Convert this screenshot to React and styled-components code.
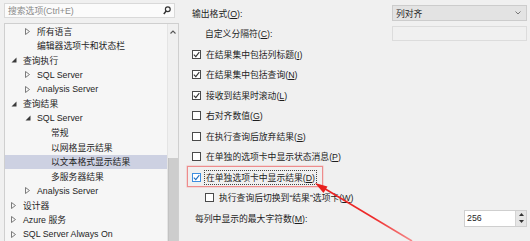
import React from "react";
import styled, { createGlobalStyle } from "styled-components";

const Global = createGlobalStyle`
  html, body { margin: 0; padding: 0; background: #f0f0f0; }
  body { font-family: "Liberation Sans", "Noto Sans CJK SC", sans-serif; color: #1e1e1e; }
  * { box-sizing: border-box; }
`;

const Page = styled.div`
  position: relative;
  width: 530px;
  height: 241px;
  overflow: hidden;
  display: flex;
  background: #f0f0f0;
  font-size: 8.8px;
`;

const LeftCol = styled.div`
  width: 180px;
  flex: none;
  padding: 3px 0 0 4px;
  display: flex;
  flex-direction: column;
  gap: 5px;
`;

const Search = styled.div`
  width: 171px;
  height: 15px;
  border: 1px solid #d9d9d9;
  background: #fbfbfb;
  display: flex;
  align-items: center;
  justify-content: space-between;
  padding: 0 3px 0 3px;
  color: #8a8a8a;
  font-size: 8.8px;
`;

const Tree = styled.div`
  width: 175px;
  height: 230px;
  border: 1px solid #cfcfcf;
  border-bottom: none;
  background: #f6f6f6;
  display: flex;
`;

const List = styled.div`
  flex: 1;
  display: flex;
  flex-direction: column;
`;

const Row = styled.div`
  height: 14.5px;
  display: flex;
  align-items: center;
  padding-left: ${(p) => 6 + p.$level * 14}px;
  background: ${(p) => (p.$selected ? "#cdd1e2" : "transparent")};
  white-space: nowrap;
  font-size: 8.8px;
  color: #1e1e1e;
`;

const ArrowCell = styled.span`
  width: 12px;
  flex: none;
  display: flex;
  align-items: center;
`;

const ScrollBar = styled.div`
  width: 11px;
  flex: none;
  display: flex;
  flex-direction: column;
  border-left: 1px solid #e4e4e4;
  background: #f0f0f0;
`;

const ScrollUp = styled.div`
  height: 14px;
  display: flex;
  align-items: center;
  justify-content: center;
  margin-top: 1px;
`;

const ScrollTrack = styled.div`
  flex: 1;
  padding-top: 119px;
  display: flex;
`;

const Thumb = styled.div`
  flex: 1;
  background: #cdcdcd;
  border-left: 1px solid #c2c2c2;
`;

const RightCol = styled.div`
  flex: 1;
  padding: 2.75px 3px 0 12px;
  display: flex;
  flex-direction: column;
`;

const FRow = styled.div`
  height: 20.5px;
  display: flex;
  align-items: center;
  justify-content: space-between;
  padding-left: ${(p) => p.$indent || 0}px;
  white-space: nowrap;
`;

const CheckLine = styled.label`
  display: flex;
  align-items: center;
  gap: 4px;
  padding-left: ${(p) => p.$indent || 0}px;
`;

const Box = styled.span`
  width: 9px;
  height: 9px;
  flex: none;
  border: 1px solid ${(p) => (p.$blue ? "#3d8ee0" : "#4a4a4a")};
  background: #fff;
  display: flex;
  align-items: center;
  justify-content: center;
`;

const LabelText = styled.span`
  color: #1e1e1e;
  padding: 0 1px;
  outline: ${(p) => (p.$focus ? "1px dotted #444" : "none")};
`;

const Select = styled.div`
  width: 135px;
  height: 16px;
  border: 1px solid #cccccc;
  background: #e3e3e3;
  display: flex;
  align-items: center;
  justify-content: space-between;
  padding: 0 5px 0 3px;
  color: #1e1e1e;
`;

const TextInput = styled.div`
  width: 135px;
  height: 15px;
  border: 1px solid #dcdcdc;
  background: #f0f0f0;
`;

const Spinner = styled.div`
  width: 63px;
  height: 17px;
  border: 1px solid #cfcfcf;
  background: #fff;
  display: flex;
  align-items: stretch;
`;

const SpinValue = styled.div`
  flex: 1;
  display: flex;
  align-items: center;
  padding-left: 2px;
  color: #1e1e1e;
`;

const SpinBtns = styled.div`
  width: 11px;
  display: flex;
  flex-direction: column;
  background: #e6e6e6;
  border-left: 1px solid #d4d4d4;
`;

const SpinBtn = styled.div`
  flex: 1;
  display: flex;
  align-items: center;
  justify-content: center;
`;

const Annot = styled.div`
  position: absolute;
  left: 187px;
  top: 166px;
  width: 136px;
  height: 21px;
  border: 1px solid #ee8c8c;
  box-shadow: 0 0 0 0.5px rgba(240, 120, 120, 0.4);
  pointer-events: none;
`;

const ArrowSvg = styled.svg`
  position: absolute;
  left: 0;
  top: 0;
  pointer-events: none;
`;

const Collapsed = () => (
  <svg width="5" height="7" viewBox="0 0 5 7">
    <path d="M0.5 0.5 L4.5 3.5 L0.5 6.5 Z" fill="none" stroke="#6e6e6e" strokeWidth="0.9" />
  </svg>
);

const Expanded = () => (
  <svg width="6" height="6" viewBox="0 0 6 6">
    <path d="M5.5 0.5 L5.5 5.5 L0.5 5.5 Z" fill="#3a3a3a" />
  </svg>
);

const Check = ({ color = "#333" }) => (
  <svg width="7" height="7" viewBox="0 0 7 7">
    <path d="M0.8 3.6 L2.8 5.6 L6.3 1.2" fill="none" stroke={color} strokeWidth="1.1" />
  </svg>
);

const U = styled.span`
  text-decoration: underline;
`;

const treeItems = [
  { level: 1, arrow: "c", text: "所有语言" },
  { level: 1, arrow: null, text: "编辑器选项卡和状态栏" },
  { level: 0, arrow: "e", text: "查询执行" },
  { level: 1, arrow: "c", text: "SQL Server" },
  { level: 1, arrow: "c", text: "Analysis Server" },
  { level: 0, arrow: "e", text: "查询结果" },
  { level: 1, arrow: "e", text: "SQL Server" },
  { level: 2, arrow: null, text: "常规" },
  { level: 2, arrow: null, text: "以网格显示结果" },
  { level: 2, arrow: null, text: "以文本格式显示结果", selected: true },
  { level: 2, arrow: null, text: "多服务器结果" },
  { level: 1, arrow: "c", text: "Analysis Server" },
  { level: 0, arrow: "c", text: "设计器" },
  { level: 0, arrow: "c", text: "Azure 服务" },
  { level: 0, arrow: "c", text: "SQL Server Always On" },
];

const checks = [
  { label: "在结果集中包括列标题", key: "I", checked: true },
  { label: "在结果集中包括查询", key: "N", checked: true },
  { label: "接收到结果时滚动", key: "L", checked: true },
  { label: "右对齐数值", key: "G", checked: false },
  { label: "在执行查询后放弃结果", key: "S", checked: false },
  { label: "在单独的选项卡中显示状态消息", key: "P", checked: false },
  { label: "在单独选项卡中显示结果", key: "D", checked: true, blue: true, focus: true },
  { label: "执行查询后切换到“结果”选项卡", key: "W", checked: false, indent: 13 },
];

export default function App() {
  return (
    <>
      <Global />
      <Page>
        <LeftCol>
          <Search>
            <span>搜索选项(Ctrl+E)</span>
            <svg width="8" height="9" viewBox="0 0 8 9">
              <circle cx="4.8" cy="3.2" r="2.4" fill="none" stroke="#333" strokeWidth="1.2" />
              <path d="M3.2 5 L0.8 8" stroke="#333" strokeWidth="1.5" />
            </svg>
          </Search>
          <Tree>
            <List>
              {treeItems.map((it, i) => (
                <Row key={i} $level={it.level} $selected={it.selected}>
                  <ArrowCell>
                    {it.arrow === "c" && <Collapsed />}
                    {it.arrow === "e" && <Expanded />}
                  </ArrowCell>
                  {it.text}
                </Row>
              ))}
            </List>
            <ScrollBar>
              <ScrollUp>
                <svg width="6" height="4" viewBox="0 0 6 4">
                  <path d="M0.5 3.5 L3 1 L5.5 3.5" fill="none" stroke="#555" strokeWidth="1.1" />
                </svg>
              </ScrollUp>
              <ScrollTrack>
                <Thumb />
              </ScrollTrack>
            </ScrollBar>
          </Tree>
        </LeftCol>
        <RightCol>
          <FRow>
            <span>
              输出格式(<U>O</U>):
            </span>
            <Select>
              <span>列对齐</span>
              <svg width="6" height="4" viewBox="0 0 6 4">
                <path d="M0.5 0.5 L3 3 L5.5 0.5" fill="none" stroke="#777" strokeWidth="1" />
              </svg>
            </Select>
          </FRow>
          <FRow $indent={13}>
            <span>
              自定义分隔符(<U>C</U>):
            </span>
            <TextInput />
          </FRow>
          {checks.map((c, i) => (
            <FRow key={i}>
              <CheckLine $indent={c.indent}>
                <Box $blue={c.blue}>{c.checked && <Check color={c.blue ? "#1f6fc4" : "#333"} />}</Box>
                <LabelText $focus={c.focus}>
                  {c.label}(<U>{c.key}</U>)
                </LabelText>
              </CheckLine>
            </FRow>
          ))}
          <FRow $indent={3}>
            <span>
              每列中显示的最大字符数(<U>M</U>):
            </span>
            <Spinner>
              <SpinValue>256</SpinValue>
              <SpinBtns>
                <SpinBtn>
                  <svg width="5" height="3" viewBox="0 0 5 3">
                    <path d="M0 3 L2.5 0 L5 3 Z" fill="#333" />
                  </svg>
                </SpinBtn>
                <SpinBtn>
                  <svg width="5" height="3" viewBox="0 0 5 3">
                    <path d="M0 0 L2.5 3 L5 0 Z" fill="#333" />
                  </svg>
                </SpinBtn>
              </SpinBtns>
            </Spinner>
          </FRow>
        </RightCol>
        <Annot />
        <ArrowSvg width="530" height="241" viewBox="0 0 530 241">
          <defs>
            <linearGradient id="fade" x1="315" y1="183" x2="412" y2="241" gradientUnits="userSpaceOnUse">
              <stop offset="0" stopColor="#e8201e" />
              <stop offset="0.6" stopColor="#ee2a2a" />
              <stop offset="1" stopColor="#f58a8a" />
            </linearGradient>
          </defs>
          <path d="M322 187 L412 241" stroke="url(#fade)" strokeWidth="1.6" />
          <path d="M315 183 L327.5 186.5 L323.5 193 Z" fill="#e8201e" />
        </ArrowSvg>
      </Page>
    </>
  );
}
